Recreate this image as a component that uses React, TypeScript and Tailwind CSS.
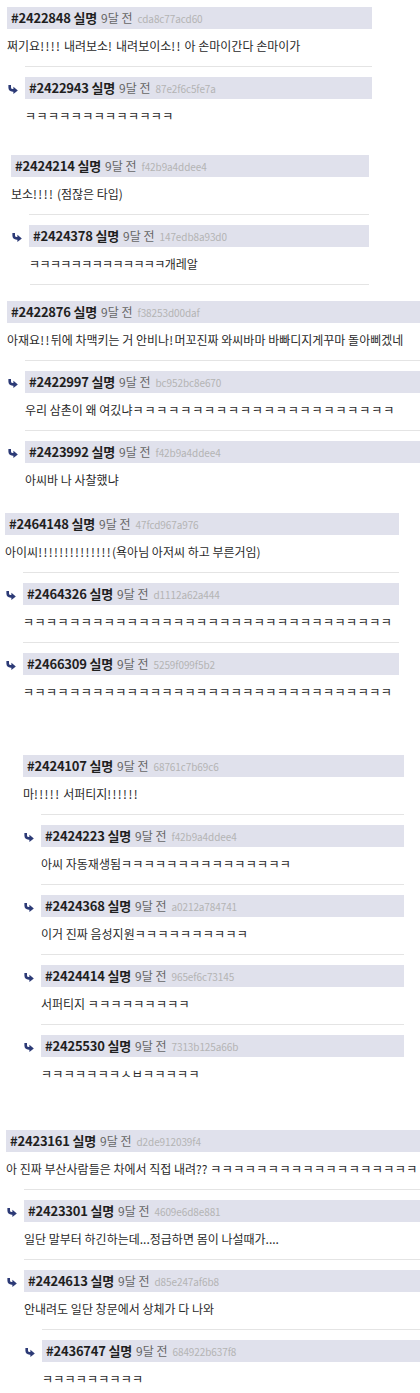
import React from "react";

type C = { id: string; hash: string; body: React.ReactNode; replies?: C[] };

function Arrow() {
  return (
    <svg width="10" height="9" viewBox="0 0 10 9" className="block">
      <path d="M1.7 0 V2.6 Q1.7 5.4 4.8 5.4 H6" fill="none" stroke="#2c3a76" strokeWidth="2.6" />
      <path d="M5.4 1.8 L9.8 5.4 L5.4 9 Z" fill="#2c3a76" />
    </svg>
  );
}

function Header({ id, hash }: { id: string; hash: string }) {
  return (
    <div className="h-[22px] bg-[#e0e1ec] flex items-center pl-[4px] whitespace-nowrap overflow-hidden">
      <span className="font-bold text-[13px] text-[#1f1f1f] tracking-[-0.2px]">#{id} 실명</span>
      <span className="ml-[4px] text-[12px] text-[#666]">9달 전</span>
      <span className="ml-[5px] text-[10px] text-[#b4b4b4] tracking-[-0.1px]">{hash}</span>
    </div>
  );
}

function Body({ children }: { children: React.ReactNode }) {
  return (
    <div className="pt-[8px] pb-[11px] leading-[18px] text-[12px] text-[#2a2a2a] whitespace-nowrap overflow-hidden">
      {children}
    </div>
  );
}

function Reply({ c }: { c: C }) {
  return (
    <div className="ml-[18px] border-t border-[#e4e4e4] pt-[10px]">
      <div className="flex items-center -ml-[18px]">
        <div className="w-[18px] flex items-center pt-[3px] pl-[1px]">
          <Arrow />
        </div>
        <div className="flex-1 min-w-0">
          <Header id={c.id} hash={c.hash} />
        </div>
      </div>
      <Body>{c.body}</Body>
      {c.replies?.map((r) => (
        <Reply key={r.id} c={r} />
      ))}
    </div>
  );
}

function Section({ c, className, trailing }: { c: C; className: string; trailing?: boolean }) {
  return (
    <div className={className}>
      <Header id={c.id} hash={c.hash} />
      <Body>{c.body}</Body>
      {c.replies?.map((r) => (
        <Reply key={r.id} c={r} />
      ))}
      {trailing && <div className="ml-[19px] border-t border-[#e4e4e4]" />}
    </div>
  );
}

// "!" runs get a little extra spacing (the reference font draws them wider)
function X({ s }: { s: string }) {
  const parts = s.split(/(!+)/);
  return (
    <>
      {parts.map((p, i) =>
        p.startsWith("!") ? (
          <span key={i} className="tracking-[1.4px]">
            {p}
          </span>
        ) : (
          <React.Fragment key={i}>{p}</React.Fragment>
        )
      )}
    </>
  );
}

const K = (n: number) => "ㅋ".repeat(n);

const s1: C = {
  id: "2422848",
  hash: "cda8c77acd60",
  body: <X s="쩌기요!!!! 내려보소! 내려보이소!! 아 손마이간다 손마이가" />,
  replies: [{ id: "2422943", hash: "87e2f6c5fe7a", body: <span className="tracking-[0.4px]">{K(13)}</span> }],
};
const s2: C = {
  id: "2424214",
  hash: "f42b9a4ddee4",
  body: <X s="보소!!!! (점잖은 타입)" />,
  replies: [
    {
      id: "2424378",
      hash: "147edb8a93d0",
      body: (
        <>
          <span className="tracking-[-0.6px]">{K(13)}</span>개레알
        </>
      ),
    },
  ],
};
const s3: C = {
  id: "2422876",
  hash: "f38253d00daf",
  body: <X s="아재요!!뒤에 차맥키는 거 안비나!머꼬진짜 와씨바마 바빠디지게꾸마 돌아삐겠네" />,
  replies: [
    {
      id: "2422997",
      hash: "bc952bc8e670",
      body: (
        <>
          우리 삼촌이 왜 여깄냐<span className="tracking-[0.9px]">{K(22)}</span>
        </>
      ),
    },
    { id: "2423992", hash: "f42b9a4ddee4", body: "아씨바 나 사찰했냐" },
  ],
};
const s4: C = {
  id: "2464148",
  hash: "47fcd967a976",
  body: <X s="아이씨!!!!!!!!!!!!!!(욕아님 아저씨 하고 부른거임)" />,
  replies: [
    { id: "2464326", hash: "d1112a62a444", body: <span className="tracking-[0.5px]">{K(32)}</span> },
    { id: "2466309", hash: "5259f099f5b2", body: <span className="tracking-[0.5px]">{K(32)}</span> },
  ],
};
const s5: C = {
  id: "2424107",
  hash: "68761c7b69c6",
  body: <X s="마!!!!! 서퍼티지!!!!!!" />,
  replies: [
    {
      id: "2424223",
      hash: "f42b9a4ddee4",
      body: (
        <>
          아씨 자동재생됨<span className="tracking-[0.3px]">{K(15)}</span>
        </>
      ),
    },
    {
      id: "2424368",
      hash: "a0212a784741",
      body: (
        <>
          이거 진짜 음성지원<span className="tracking-[0.3px]">{K(10)}</span>
        </>
      ),
    },
    {
      id: "2424414",
      hash: "965ef6c73145",
      body: (
        <>
          서퍼티지 <span className="tracking-[0.3px]">{K(9)}</span>
        </>
      ),
    },
    {
      id: "2425530",
      hash: "7313b125a66b",
      body: <span className="tracking-[0.3px]">ㅋㅋㅋㅋㅋㅋㅋㅅㅂㅋㅋㅋㅋㅋ</span>,
    },
  ],
};
const s6: C = {
  id: "2423161",
  hash: "d2de912039f4",
  body: (
    <>
      아 진짜 부산사람들은 차에서 직접 내려?? <span className="tracking-[0.5px]">{K(18)}</span>
    </>
  ),
  replies: [
    { id: "2423301", hash: "4609e6d8e881", body: "일단 말부터 하긴하는데...정급하면 몸이 나설때가...." },
    {
      id: "2424613",
      hash: "d85e247af6b8",
      body: "안내려도 일단 창문에서 상체가 다 나와",
      replies: [
        { id: "2436747", hash: "684922b637f8", body: <span className="tracking-[0.2px]">{K(9)}</span> },
      ],
    },
  ],
};

export default function App() {
  return (
    <div
      className="w-[420px] h-[1393px] overflow-hidden bg-white pt-[7px]"
      style={{ fontFamily: '"Noto Sans CJK KR", "Noto Sans", sans-serif' }}
    >
      <Section c={s1} className="ml-[7px] w-[365px]" />
      <Section c={s2} className="ml-[11px] w-[358px] mt-[19px]" trailing />
      <Section c={s3} className="ml-[7px] w-[413px] mt-[16px]" />
      <Section c={s4} className="ml-[5px] w-[394px] mt-[13px]" />
      <Section c={s5} className="ml-[23px] w-[381px] mt-[43px]" />
      <Section c={s6} className="ml-[6px] w-[414px] mt-[36px]" />
    </div>
  );
}
